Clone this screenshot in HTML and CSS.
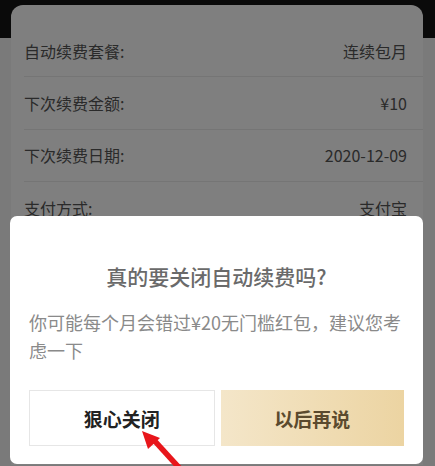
FILE: index.html
```html
<!DOCTYPE html>
<html lang="zh-CN">
<head>
<meta charset="utf-8">
<link rel="stylesheet" href="styles.css">
</head>
<body>
<div class="page">
  <div class="topbar"></div>
  <div class="card">
    <div class="row"><span>自动续费套餐:</span><span>连续包月</span></div>
    <div class="row"><span>下次续费金额:</span><span>¥10</span></div>
    <div class="row"><span>下次续费日期:</span><span>2020-12-09</span></div>
    <div class="row last"><span>支付方式:</span><span>支付宝</span></div>
  </div>
</div>
<div class="mask">
  <div class="dialog">
    <h2 class="title">真的要关闭自动续费吗?</h2>
    <p class="desc">你可能每个月会错过¥20无门槛红包，建议您考虑一下</p>
    <div class="actions">
      <button class="btn btn-close">狠心关闭</button>
      <button class="btn btn-later">以后再说</button>
    </div>
  </div>
</div>
<svg class="arrow" width="435" height="466" viewBox="0 0 435 466">
  <polygon points="142,431 160,438 148,449" fill="#e8161b"/>
  <polygon points="151.5,441.5 155.5,437.8 185,470 181,474" fill="#e8161b"/>
</svg>
</body>
</html>
```
FILE: styles.css
```css
* { box-sizing: border-box; }
html, body { margin: 0; padding: 0; }
body {
  width: 435px;
  height: 466px;
  overflow: hidden;
  font-family: "Noto Sans CJK SC", "Noto Sans", sans-serif;
  background: #f4f4f4;
  position: relative;
}
.page {
  position: relative;
  height: 466px;
}
.topbar {
  height: 38px;
  background: #141414;
}
.card {
  margin: -33px 12px 0 11px;
  background: #fff;
  border-radius: 12px 12px 0 0;
  padding: 0 0 0 13px;
  height: 460px;
}
.row {
  display: flex;
  justify-content: space-between;
  align-items: center;
  height: 52.5px;
  padding-right: 16px;
  font-size: 16px;
  color: #555;
  border-bottom: 1px solid #eaeaea;
}
.row:first-child { height: 72px; padding-top: 20px; }
.row.last { border-bottom: none; }
.mask {
  position: fixed;
  inset: 0;
  background: rgba(0, 0, 0, 0.5);
  display: flex;
  flex-direction: column;
  justify-content: flex-end;
  padding: 0 12px 2px 10px;
}
.dialog {
  background: #fff;
  border-radius: 7px;
  padding: 45px 19px 18px;
}
.title {
  margin: 0;
  text-align: center;
  font-size: 21px;
  line-height: 30px;
  font-weight: 500;
  color: #6a6a6a;
}
.desc {
  margin: 17px 0 0;
  font-size: 18px;
  line-height: 28px;
  color: #8a8a8a;
}
.actions {
  margin-top: 26px;
  display: flex;
  gap: 6px;
}
.btn {
  flex: 1;
  height: 56px;
  font-family: inherit;
  font-size: 19px;
  font-weight: 700;
  border-radius: 0;
  cursor: pointer;
}
.btn-close {
  background: #fff;
  border: 1px solid #e6e6e6;
  color: #222;
}
.btn-later {
  background: linear-gradient(90deg, #f4e6c9 0%, #ecd4a2 100%);
  border: none;
  color: #5b4a2e;
}
.arrow {
  position: absolute;
  left: 0;
  top: 0;
}
```
